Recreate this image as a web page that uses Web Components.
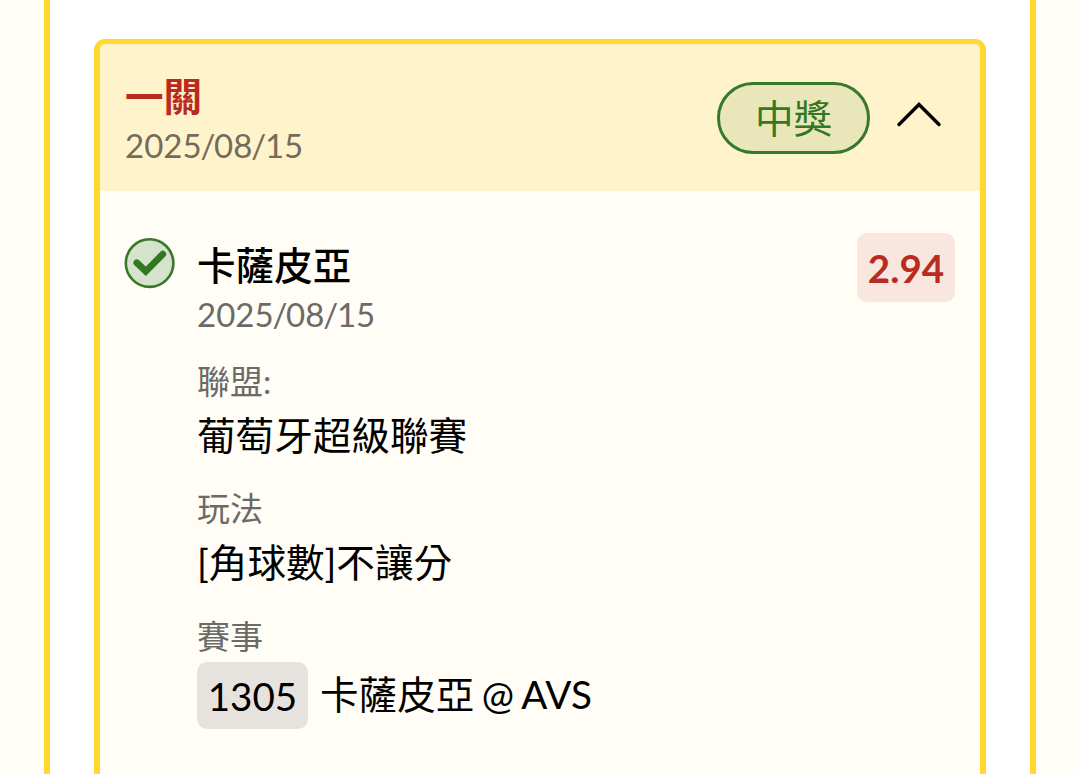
<!DOCTYPE html>
<html lang="zh-Hant">
<head>
<meta charset="utf-8">
<title>一關</title>
<style>
    body {
        margin: 0;
        height: 774px;
        overflow: hidden;
        background: #fffdf5;
        color: #000;
        font-family: "Lato", "Noto Sans CJK TC", sans-serif;
        font-size: 38.6px;
        line-height: 46px;
    }
</style>
</head>
<body>
<bet-panel>
    <bet-leg title="一關" date="2025/08/15" status="中獎">
        <bet-pick name="卡薩皮亞" date="2025/08/15" odds="2.94">
            <bet-field label="聯盟:">葡萄牙超級聯賽</bet-field>
            <bet-field label="玩法">[角球數]不讓分</bet-field>
            <bet-field label="賽事" code="1305">卡薩皮亞 @ AVS</bet-field>
        </bet-pick>
    </bet-leg>
</bet-panel>

<script>
// Outer frame, continues above and below the viewport
class BetPanel extends HTMLElement {
    constructor() {
        super();
        this.attachShadow({ mode: 'open' });
    }

    connectedCallback() {
        this.shadowRoot.innerHTML = `
            <style>
                :host {
                    display: flex;
                    box-sizing: border-box;
                    height: 774px;
                    margin: 0 44px;
                    padding: 39px 44px 0;
                    background: #fff;
                    border: solid #ffd72e;
                    border-width: 0 6px;
                }
            </style>
            <slot></slot>
        `;
    }
}

// Date with slightly tightened slashes
class BetDate extends HTMLElement {
    constructor() {
        super();
        this.attachShadow({ mode: 'open' });
    }

    connectedCallback() {
        const value = this.getAttribute('value');

        this.shadowRoot.innerHTML = `
            <style>
                :host {
                    display: block;
                    font-size: 33px;
                    line-height: 40px;
                }

                span {
                    margin: 0 -1.2px;
                }
            </style>
            ${value.replace(/\//g, '<span>/</span>')}
        `;
    }
}

// Card with a header (title, date, status) and the picks below it
class BetLeg extends HTMLElement {
    constructor() {
        super();
        this.attachShadow({ mode: 'open' });
    }

    connectedCallback() {
        this.shadowRoot.innerHTML = `
            <style>
                :host {
                    display: flex;
                    flex: 1;
                    flex-direction: column;
                    box-sizing: border-box;
                    border: solid #ffd72e;
                    border-width: 5px 6px 0;
                    border-radius: 11px 11px 0 0;
                    background: #fffdf5;
                }

                header {
                    display: flex;
                    align-items: center;
                    box-sizing: border-box;
                    height: 147px;
                    padding: 0 38px 0 25px;
                    border-radius: 5px 5px 0 0;
                    background: #fff3cc;
                }

                .heading {
                    flex: 1;
                    display: flex;
                    flex-direction: column;
                    gap: 6px;
                    padding-top: 3px;
                }

                .title {
                    font-weight: 700;
                    color: #b92b20;
                }

                bet-date {
                    color: #736c5c;
                }

                .status {
                    box-sizing: border-box;
                    width: 153px;
                    height: 72px;
                    border: 3px solid #36792a;
                    border-radius: 36px;
                    background: #e9e7b9;
                    color: #327824;
                    line-height: 66px;
                    text-align: center;
                }

                svg {
                    width: 46px;
                    height: 28px;
                    margin: -6px 0 0 26px;
                }
            </style>
            <header>
                <div class="heading">
                    <span class="title">${this.getAttribute('title')}</span>
                    <bet-date value="${this.getAttribute('date')}"></bet-date>
                </div>
                <span class="status">${this.getAttribute('status')}</span>
                <svg viewBox="0 0 46 28" fill="none" stroke="#000" stroke-width="3.4" stroke-linecap="round">
                    <path d="M3 23.5 L23 3.5 L43 23.5"/>
                </svg>
            </header>
            <slot></slot>
        `;
    }
}

class BetPick extends HTMLElement {
    constructor() {
        super();
        this.attachShadow({ mode: 'open' });
    }

    connectedCallback() {
        this.shadowRoot.innerHTML = `
            <style>
                :host {
                    display: flex;
                    align-items: flex-start;
                    padding: 42px 25px 0 24px;
                }

                svg {
                    width: 52px;
                    height: 52px;
                    margin: 4px 21px 0 0;
                }

                .info {
                    flex: 1;
                    display: flex;
                    flex-direction: column;
                    padding-top: 9px;
                }

                .name {
                    font-weight: 500;
                }

                bet-date {
                    margin: 6px 0 28px;
                    color: #6b6a67;
                }

                .fields {
                    display: flex;
                    flex-direction: column;
                    gap: 31px;
                }

                .odds {
                    width: 98px;
                    height: 69px;
                    border-radius: 10px;
                    background: #f8e6df;
                    color: #b92b20;
                    font-weight: 700;
                    line-height: 71px;
                    text-align: center;
                }
            </style>
            <svg viewBox="0 0 52 52" fill="none">
                <circle cx="25.6" cy="26.1" r="23.8" fill="#d6e3cc" stroke="#36792a" stroke-width="2.6"/>
                <path d="M12.8 25.8 L21.8 34.3 L38.8 17.2" stroke="#327820" stroke-width="6.8" stroke-linecap="round"/>
            </svg>
            <div class="info">
                <span class="name">${this.getAttribute('name')}</span>
                <bet-date value="${this.getAttribute('date')}"></bet-date>
                <div class="fields"><slot></slot></div>
            </div>
            <span class="odds">${this.getAttribute('odds')}</span>
        `;
    }
}

// Label with its value; the optional code is drawn as a grey chip
class BetField extends HTMLElement {
    constructor() {
        super();
        this.attachShadow({ mode: 'open' });
    }

    connectedCallback() {
        const code = this.getAttribute('code');

        this.shadowRoot.innerHTML = `
            <style>
                :host {
                    display: flex;
                    flex-direction: column;
                }

                .label {
                    margin-bottom: 12px;
                    font-size: 33px;
                    line-height: 38px;
                    color: #6b6a67;
                }

                :host([code]) .label {
                    margin: 1px 0 7px;
                }

                .value {
                    display: flex;
                    align-items: center;
                    gap: 12px;
                    white-space: nowrap;
                    word-spacing: -2.5px;
                }

                .code {
                    width: 111px;
                    height: 67px;
                    border-radius: 10px;
                    background: #e6e3de;
                    line-height: 69px;
                    text-align: center;
                }

                .code + .text {
                    padding-bottom: 3px;
                }
            </style>
            <span class="label">${this.getAttribute('label')}</span>
            <div class="value">
                ${code ? `<span class="code">${code}</span>` : ''}
                <span class="text"><slot></slot></span>
            </div>
        `;
    }
}

customElements.define('bet-panel', BetPanel);
customElements.define('bet-date', BetDate);
customElements.define('bet-leg', BetLeg);
customElements.define('bet-pick', BetPick);
customElements.define('bet-field', BetField);
</script>
</body>
</html>
